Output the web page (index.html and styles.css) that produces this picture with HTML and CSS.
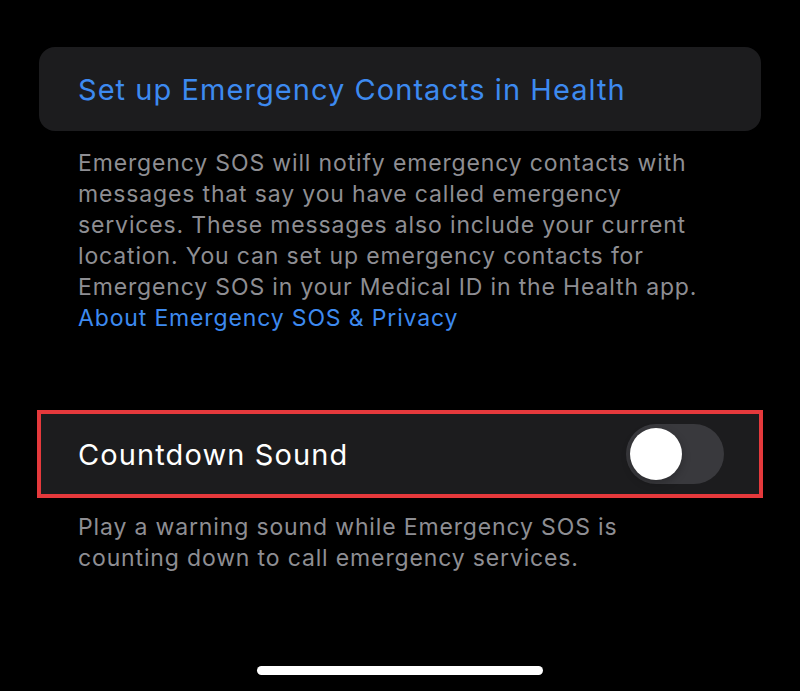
FILE: index.html
```html
<!DOCTYPE html>
<html lang="en">
  <head>
    <meta charset="UTF-8" />
    <meta name="viewport" content="width=device-width, initial-scale=1.0" />
    <title>Emergency SOS</title>
    <link rel="stylesheet" href="styles.css">
  </head>
  <body>
    <main class="settings">
      <section class="group">
        <div class="cell">
          <a class="cell-link" href="#">Set up Emergency Contacts in Health</a>
        </div>
        <p class="group-footer">
          Emergency SOS will notify emergency contacts with messages that say you have called emergency services. These messages also include your current location. You can set up emergency contacts for Emergency SOS in your Medical ID in the Health app.
          <a class="footer-link" href="#">About Emergency SOS &amp; Privacy</a>
        </p>
      </section>

      <section class="group group-spaced">
        <div class="highlight">
          <div class="cell cell-row">
            <span class="cell-label">Countdown Sound</span>
            <span class="switch" role="switch" aria-checked="false">
              <span class="switch-knob"></span>
            </span>
          </div>
        </div>
        <p class="group-footer">
          Play a warning sound while Emergency SOS is counting down to call emergency services.
        </p>
      </section>
    </main>
    <div class="home-bar"></div>
  </body>
</html>
```

FILE: styles.css
```css
* {
  box-sizing: border-box;
  --bg: #000;
  --cell-bg: #1c1c1e;
  --tint: #3d8af0;
  --footer-text: #8e8e93;
  --track: #39393d;
  --mark: #e5393c;
}

html,
body {
  margin: 0;
  height: 100%;
  background: var(--bg);
}

body {
  font-family: "Inter", "Roboto", sans-serif;
  display: flex;
  flex-direction: column;
  -webkit-font-smoothing: antialiased;
}

.settings {
  flex: 1;
  padding: 47px 39px 0;
}

.group-spaced {
  margin-top: 76px;
}

.cell {
  background: var(--cell-bg);
  border-radius: 16px;
  height: 84px;
  display: flex;
  align-items: center;
  padding: 0 39px;
}

.cell-link {
  color: var(--tint);
  text-decoration: none;
  font-size: 29px;
  letter-spacing: 1.05px;
}

.group-footer {
  margin: 0;
  padding: 17px 39px 0;
  color: var(--footer-text);
  font-size: 23px;
  line-height: 31px;
  letter-spacing: 0.85px;
  max-width: 722px;

  .footer-link {
    display: block;
    color: var(--tint);
    text-decoration: none;
  }
}

.highlight {
  margin: 0 -2px;
  border: 4px solid var(--mark);

  .cell {
    border-radius: 0;
    height: 80px;
    padding: 0 37px;
  }

  + .group-footer {
    padding-top: 14px;
  }
}

.cell-row {
  justify-content: space-between;
}

.cell-label {
  color: #fff;
  font-size: 29px;
  letter-spacing: 1.1px;
}

.switch {
  width: 98px;
  height: 60px;
  border-radius: 30px;
  background: var(--track);
  padding: 4px;
  display: flex;
  margin-right: -2px;

  .switch-knob {
    width: 52px;
    height: 52px;
    border-radius: 50%;
    background: #fff;
    box-shadow: 0 3px 8px rgba(0, 0, 0, 0.25);
  }
}

.home-bar {
  align-self: center;
  width: 286px;
  height: 9px;
  border-radius: 5px;
  background: #fff;
  margin-bottom: 16px;
}
```
